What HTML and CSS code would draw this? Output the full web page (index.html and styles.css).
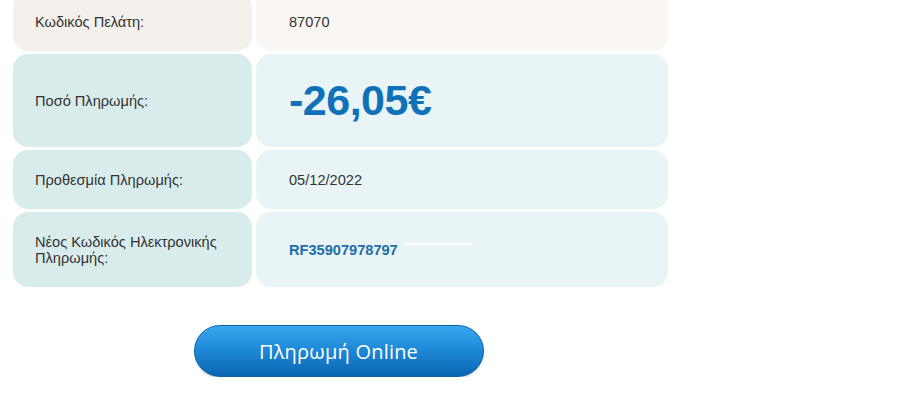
FILE: index.html
```html
<!DOCTYPE html>
<html lang="el">
<head>
  <meta charset="UTF-8" />
  <meta name="viewport" content="width=device-width, initial-scale=1.0"/>
  <title>Πληρωμή Λογαριασμού</title>
  <link rel="stylesheet" href="styles.css">
</head>
<body>
  <div class="container">
    <div class="bill">
      <div class="row row-top">
        <div class="label">Κωδικός Πελάτη:</div>
        <div class="value">87070</div>
      </div>

      <div class="row row-amount">
        <div class="label">Ποσό Πληρωμής:</div>
        <div class="value amount">-26,05€</div>
      </div>

      <div class="row row-date">
        <div class="label">Προθεσμία Πληρωμής:</div>
        <div class="value">05/12/2022</div>
      </div>

      <div class="row row-code">
        <div class="label">Νέος Κωδικός Ηλεκτρονικής Πληρωμής:</div>
        <div class="value code">RF35907978797<span class="mask"></span></div>
      </div>
    </div>

    <div class="actions">
      <button class="pay">Πληρωμή Online</button>
    </div>
  </div>
</body>
</html>
```

FILE: styles.css
```css
body {
  font-family: Arial, "Liberation Sans", sans-serif;
  background: #ffffff;
  margin: 0;
  padding: 0;
}
.container {
  width: 655px;
  padding-left: 13px;
  margin-top: -8px;
}
.bill {
  display: flex;
  flex-direction: column;
  gap: 3px;
}
.row {
  display: grid;
  grid-template-columns: 239px 412px;
  column-gap: 4px;
}
.label,
.value {
  display: flex;
  align-items: center;
  border-radius: 15px;
  font-size: 14.6px;
  color: #333;
}
.label {
  padding: 0 22px;
  line-height: 16px;
  background: #d9ecec;
}
.value {
  padding: 0 33px;
  background: #e8f4f5;
}
.row-top {
  height: 59px;
}
.row-top .label {
  background: #f4f0eb;
}
.row-top .value {
  background: #f9f6f3;
}
.row-amount {
  height: 93px;
}
.row-date {
  height: 59px;
}
.row-code {
  height: 75px;
}
.amount {
  font-size: 43px;
  font-weight: bold;
  letter-spacing: -0.5px;
  color: #1071b8;
}
.code {
  font-weight: bold;
  color: #1d6ea8;
}
.mask {
  display: inline-block;
  width: 67px;
  height: 2px;
  margin: 0 0 12px 7px;
  background: #fff;
}
.actions {
  display: flex;
  justify-content: center;
  margin-top: 38px;
  padding-right: 4px;
}
.pay {
  width: 290px;
  height: 52px;
  border: 1px solid #0d62a6;
  border-radius: 26px;
  background: linear-gradient(to bottom, #3aa6ee 0%, #1f8ad8 45%, #0c66b2 100%);
  box-shadow: 0 1px 2px rgba(0,0,0,0.2);
  color: #fff;
  font-family: "Open Sans", "Noto Sans", sans-serif;
  font-size: 20px;
  letter-spacing: 0.2px;
  cursor: pointer;
}
.pay:hover {
  background: linear-gradient(to bottom, #2f98e0 0%, #0c5ea5 100%);
}
```
